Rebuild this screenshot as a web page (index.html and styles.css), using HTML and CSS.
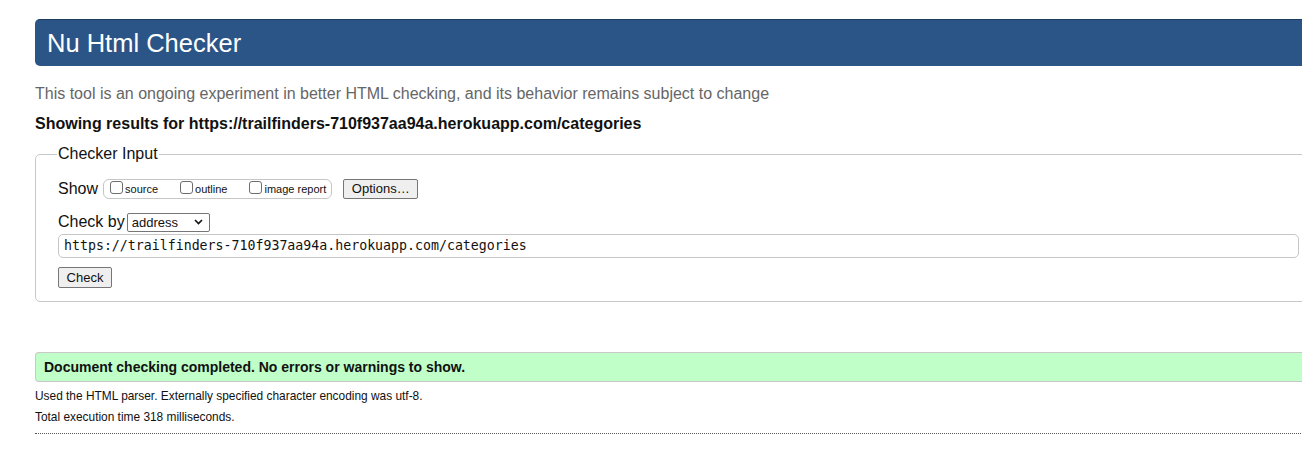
FILE: index.html
```html
<!DOCTYPE html>
<html>
<head>
<meta charset="utf-8">
<link rel="stylesheet" href="styles.css">
</head>
<body>
<div class="page">
  <h1 class="title">Nu Html Checker</h1>
  <p class="intro">This tool is an ongoing experiment in better HTML checking, and its behavior remains subject to change</p>
  <p class="showing">Showing results for https://trailfinders-710f937aa94a.herokuapp.com/categories</p>
  <fieldset class="checker">
    <legend>Checker Input</legend>
    <div class="row show-row">
      <span class="lbl">Show</span>
      <span class="group">
        <label class="cb"><span class="box"></span>source</label>
        <label class="cb"><span class="box"></span>outline</label>
        <label class="cb"><span class="box"></span>image report</label>
      </span>
      <button class="btn options">Options…</button>
    </div>
    <div class="row by-row">
      <span class="lbl">Check by</span>
      <span class="select">address<svg width="9" height="6" viewBox="0 0 9 6"><path d="M1 1l3.5 3.5L8 1" fill="none" stroke="#111" stroke-width="1.6"/></svg></span>
    </div>
    <div class="url">https://trailfinders-710f937aa94a.herokuapp.com/categories</div>
    <button class="btn check">Check</button>
  </fieldset>
  <div class="success">Document checking completed. No errors or warnings to show.</div>
  <p class="small">Used the HTML parser. Externally specified character encoding was utf-8.</p>
  <p class="small">Total execution time 318 milliseconds.</p>
  <div class="dots"></div>
</div>
</body>
</html>
```

FILE: styles.css
```css
html, body {
  margin: 0;
  padding: 0;
  overflow: hidden;
  background: #fff;
}
body {
  font-family: "Liberation Sans", Arial, sans-serif;
  color: #111;
}
.page {
  margin-left: 35px;
  width: 1290px;
  padding-top: 19px;
}
.title {
  margin: 0;
  height: 47px;
  box-sizing: border-box;
  background: #2b5587;
  border-top: 1px solid #1d3b60;
  border-radius: 5px 0 0 5px;
  color: #fff;
  font-weight: normal;
  font-size: 25.5px;
  line-height: 46px;
  padding-left: 12px;
}
.intro {
  margin: 18px 0 0;
  font-size: 16px;
  line-height: 20px;
  color: #666;
}
.showing {
  margin: 10px 0 0;
  font-size: 16px;
  line-height: 20px;
  font-weight: bold;
  color: #111;
}
.checker {
  margin: 11px 0 0;
  border: 1px solid #c8c8c8;
  border-radius: 5px 0 0 5px;
  padding: 15px 0 13px 22px;
  min-width: 0;
}
.checker legend {
  font-size: 16px;
  padding: 0 1px;
  margin-left: -1px;
  color: #111;
}
.row {
  display: flex;
  align-items: center;
}
.lbl {
  font-size: 16px;
}
.show-row {
  height: 22px;
}
.group {
  display: inline-flex;
  align-items: center;
  margin-left: 5px;
  height: 18px;
  border: 1px solid #c6c6c6;
  border-radius: 6px;
  padding: 0 5px 0 6px;
}
.cb {
  display: inline-flex;
  align-items: center;
  font-size: 11px;
  margin-right: 22px;
}
.cb:last-child {
  margin-right: 0;
}
.box {
  width: 11px;
  height: 11px;
  border: 1px solid #6d6d6d;
  border-radius: 3px;
  margin-right: 2px;
  margin-top: -3px;
  background: #fff;
}
.btn {
  font-family: "Liberation Sans", Arial, sans-serif;
  font-size: 13px;
  color: #111;
  background: #efefef;
  border: 1px solid #767676;
  border-radius: 2px;
  padding: 0 6px;
  height: 20px;
  line-height: 18px;
}
.options {
  margin-left: 11px;
  width: 75px;
}
.by-row {
  margin-top: 12px;
  height: 20px;
}
.select {
  display: inline-flex;
  align-items: center;
  justify-content: space-between;
  box-sizing: border-box;
  width: 83px;
  height: 19px;
  margin-left: 2px;
  border: 1px solid #767676;
  border-radius: 2px;
  padding: 0 6px 0 4px;
  font-size: 13px;
}
.url {
  margin-top: 2px;
  box-sizing: border-box;
  height: 24px;
  margin-right: 3px;
  border: 1px solid #c6c6c6;
  border-radius: 5px;
  padding-left: 5px;
  font-family: "DejaVu Sans Mono", monospace;
  font-size: 13.25px;
  line-height: 22px;
  width: 1241px;
}
.check {
  margin-top: 9px;
  width: 54px;
  height: 21px;
  display: block;
}
.success {
  margin-top: 50px;
  box-sizing: border-box;
  height: 30px;
  background: #c0ffc8;
  border: 1px solid #c8c8c8;
  border-right: 0;
  border-radius: 4px 0 0 4px;
  padding-left: 8px;
  font-size: 14px;
  font-weight: bold;
  line-height: 28px;
}
.small {
  margin: 7px 0 0;
  font-size: 11.9px;
  line-height: 14px;
}
.small + .small {
  margin-top: 7px;
}
.dots {
  margin-top: 9px;
  border-top: 1px dotted #555;
}
```
